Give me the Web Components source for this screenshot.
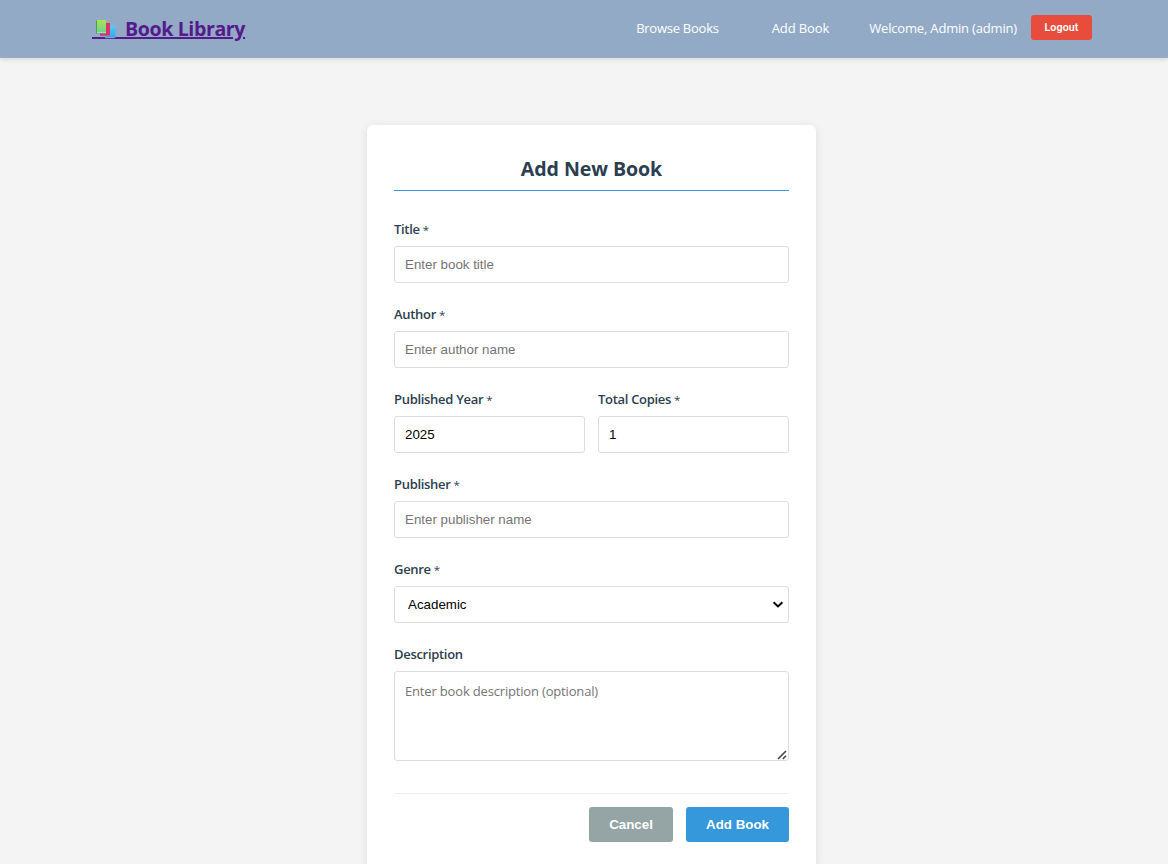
<!DOCTYPE html>
<html lang="en">
<head>
<meta charset="utf-8">
<title>Book Library</title>
<style>
html,body{margin:0;height:864px;overflow:hidden}
body{background:#f4f4f4;font-family:"Open Sans","Noto Sans",sans-serif;font-size:13px;color:#2c3e50}
</style>
</head>
<body>
<library-app></library-app>
<script>
const define = (name, html, setup) => customElements.define(name, class extends HTMLElement {
  connectedCallback() {
    if (this.shadowRoot) return;
    const t = document.createElement('template');
    t.innerHTML = html;
    this.attachShadow({mode: 'open'}).append(t.content.cloneNode(true));
    if (setup) setup(this, this.shadowRoot);
  }
});

define('book-brand', `
<style>
:host{display:block}
a{display:flex;align-items:center;height:32px;color:#551a8b;font-weight:700;font-size:19.6px;line-height:32px;letter-spacing:-.4px;text-decoration:underline;text-decoration-thickness:2px;text-underline-offset:1px;white-space:nowrap}
svg{display:block;width:33px;height:32px;flex:none}
</style>
<a href="#"><svg viewBox="0 0 33 32">
<defs><linearGradient id="g" x1="0" y1="0" x2="0" y2="1"><stop stop-color="#b0e052"/><stop offset="1" stop-color="#6bd58c"/></linearGradient>
<linearGradient id="b" x1="0" y1="0" x2="0" y2="1"><stop stop-color="#55cdf8"/><stop offset="1" stop-color="#35a5f0"/></linearGradient></defs>
<rect y="24" width="33" height="2" fill="#551a8b"/>
<path d="M14 12.5h9.5v12.5H13z" fill="url(#b)"/><path d="M13.5 24h9v1.2H13z" fill="#8b93dc"/>
<path d="M8 10h10v12.5H8z" fill="#e52e62"/><path d="M8 20h5v2.5H8z" fill="#a24a72"/>
<path d="M4 7.5h9.5v13H4z" fill="#47a34c"/><path d="M5 7h9v12H5z" fill="url(#g)"/><path d="M5 19h9v1.2H5z" fill="#c8c7cc"/>
</svg><slot></slot></a>`);

define('nav-link', `
<style>:host{display:block}a{color:#fff;text-decoration:none;white-space:nowrap;line-height:20px;display:block}</style>
<a href="#"><slot></slot></a>`);

define('action-button', `
<style>
:host{display:block}
button{display:block;width:100%;height:35px;border:0;border-radius:3px;padding:0;background:var(--button-color);color:#fff;font:bold 13.33px "Liberation Sans",Arial,sans-serif}
:host([small]) button{height:25px;font:600 10.67px Roboto,sans-serif;letter-spacing:.1px}
</style>
<button type="button"><slot></slot></button>`);

define('app-header', `
<style>
:host{display:flex;justify-content:space-between;box-sizing:border-box;height:58px;padding:13px 76px 0 92px;background:#92aac6;box-shadow:0 2px 4px rgba(0,0,0,.1);color:#fff}
nav{display:flex;align-items:center;height:30px}
.add{margin-left:53px}.user{margin:0 14px 0 40px;line-height:20px;white-space:nowrap}
action-button{width:61px;--button-color:#e74c3c;margin-top:-1px}
.browse{letter-spacing:-.25px}.add{letter-spacing:-.1px}.user{letter-spacing:-.18px}
</style>
<book-brand>Book Library</book-brand>
<nav><nav-link class="browse">Browse Books</nav-link><nav-link class="add">Add Book</nav-link><span class="user">Welcome, Admin (admin)</span><action-button small>Logout</action-button></nav>`);

define('form-field', `
<style>
:host{display:block;flex:1 1 0;min-width:0}
label{display:block;height:20px;line-height:20px;margin-bottom:7px;font-weight:600;letter-spacing:-.3px;white-space:nowrap}
i{font-style:normal;font-weight:400;font-size:11.5px;letter-spacing:0}
div{position:relative}
input,select,textarea{display:block;box-sizing:border-box;width:100%;height:37px;margin:0;padding:0 10px;border:1px solid #ddd;border-radius:3px;background:#fff;color:#000;font:13.33px "Liberation Sans",Arial,sans-serif;outline:0}
select{appearance:none;padding:0 13px}
textarea{height:90px;padding:10px;font:13px/19px "Open Sans","Noto Sans",sans-serif;letter-spacing:-.17px;resize:none}
svg{display:none;position:absolute}
textarea~.grip{display:block;right:2px;bottom:1.5px;width:10px;height:10px}
select~.arrow{display:block;right:5px;top:15px;width:12px;height:8px;pointer-events:none}
::placeholder{color:#757575;opacity:1}
</style>
<label></label><div><svg class="grip" viewBox="0 0 10 10"><path d="M1 9 9 1M5.8 9 9 5.8" fill="none" stroke="#444" stroke-width="1.6"/></svg><svg class="arrow" viewBox="0 0 12 8"><path d="M1.6 1.2 6 5.4 10.4 1.2" fill="none" stroke="#000" stroke-width="2"/></svg></div>`, (host, root) => {
  const label = root.querySelector('label');
  label.textContent = host.getAttribute('label');
  if (host.hasAttribute('required')) {
    const star = document.createElement('i');
    star.textContent = ' *';
    label.append(star);
  }
  const kind = host.getAttribute('kind') || 'input';
  const control = document.createElement(kind);
  if (kind === 'select') control.add(new Option(host.getAttribute('value')));
  else {
    control.placeholder = host.getAttribute('hint') || '';
    control.value = host.getAttribute('value') || '';
  }
  root.querySelector('div').prepend(control);
});

define('book-form', `
<style>
:host{display:block;box-sizing:border-box;width:449px;padding:27px;background:#fff;border-radius:6px;box-shadow:0 2px 10px rgba(0,0,0,.1)}
h2{margin:0 0 28px;height:38px;border-bottom:1px solid #3498db;text-align:center;font-size:19.6px;line-height:34px;font-weight:700;letter-spacing:-.08px}
.fields{display:flex;flex-direction:column;gap:21px}
.row{display:flex;gap:13px}
footer{display:flex;justify-content:flex-end;gap:13px;margin-top:32px;padding-top:13px;border-top:1px solid #eee}
.cancel{width:84px;--button-color:#95a5a6}.save{width:103px;--button-color:#3498db}
</style>
<h2>Add New Book</h2>
<div class="fields">
<form-field label="Title" required hint="Enter book title"></form-field>
<form-field label="Author" required hint="Enter author name"></form-field>
<div class="row"><form-field label="Published Year" required value="2025"></form-field><form-field label="Total Copies" required value="1"></form-field></div>
<form-field label="Publisher" required hint="Enter publisher name"></form-field>
<form-field label="Genre" required kind="select" value="Academic"></form-field>
<form-field label="Description" kind="textarea" hint="Enter book description (optional)"></form-field>
</div>
<footer><action-button class="cancel">Cancel</action-button><action-button class="save">Add Book</action-button></footer>`);

define('library-app', `
<style>:host{display:block}main{display:flex;justify-content:center;padding:67px 0 0 15px}</style>
<app-header></app-header><main><book-form></book-form></main>`);
</script>
</body>
</html>
